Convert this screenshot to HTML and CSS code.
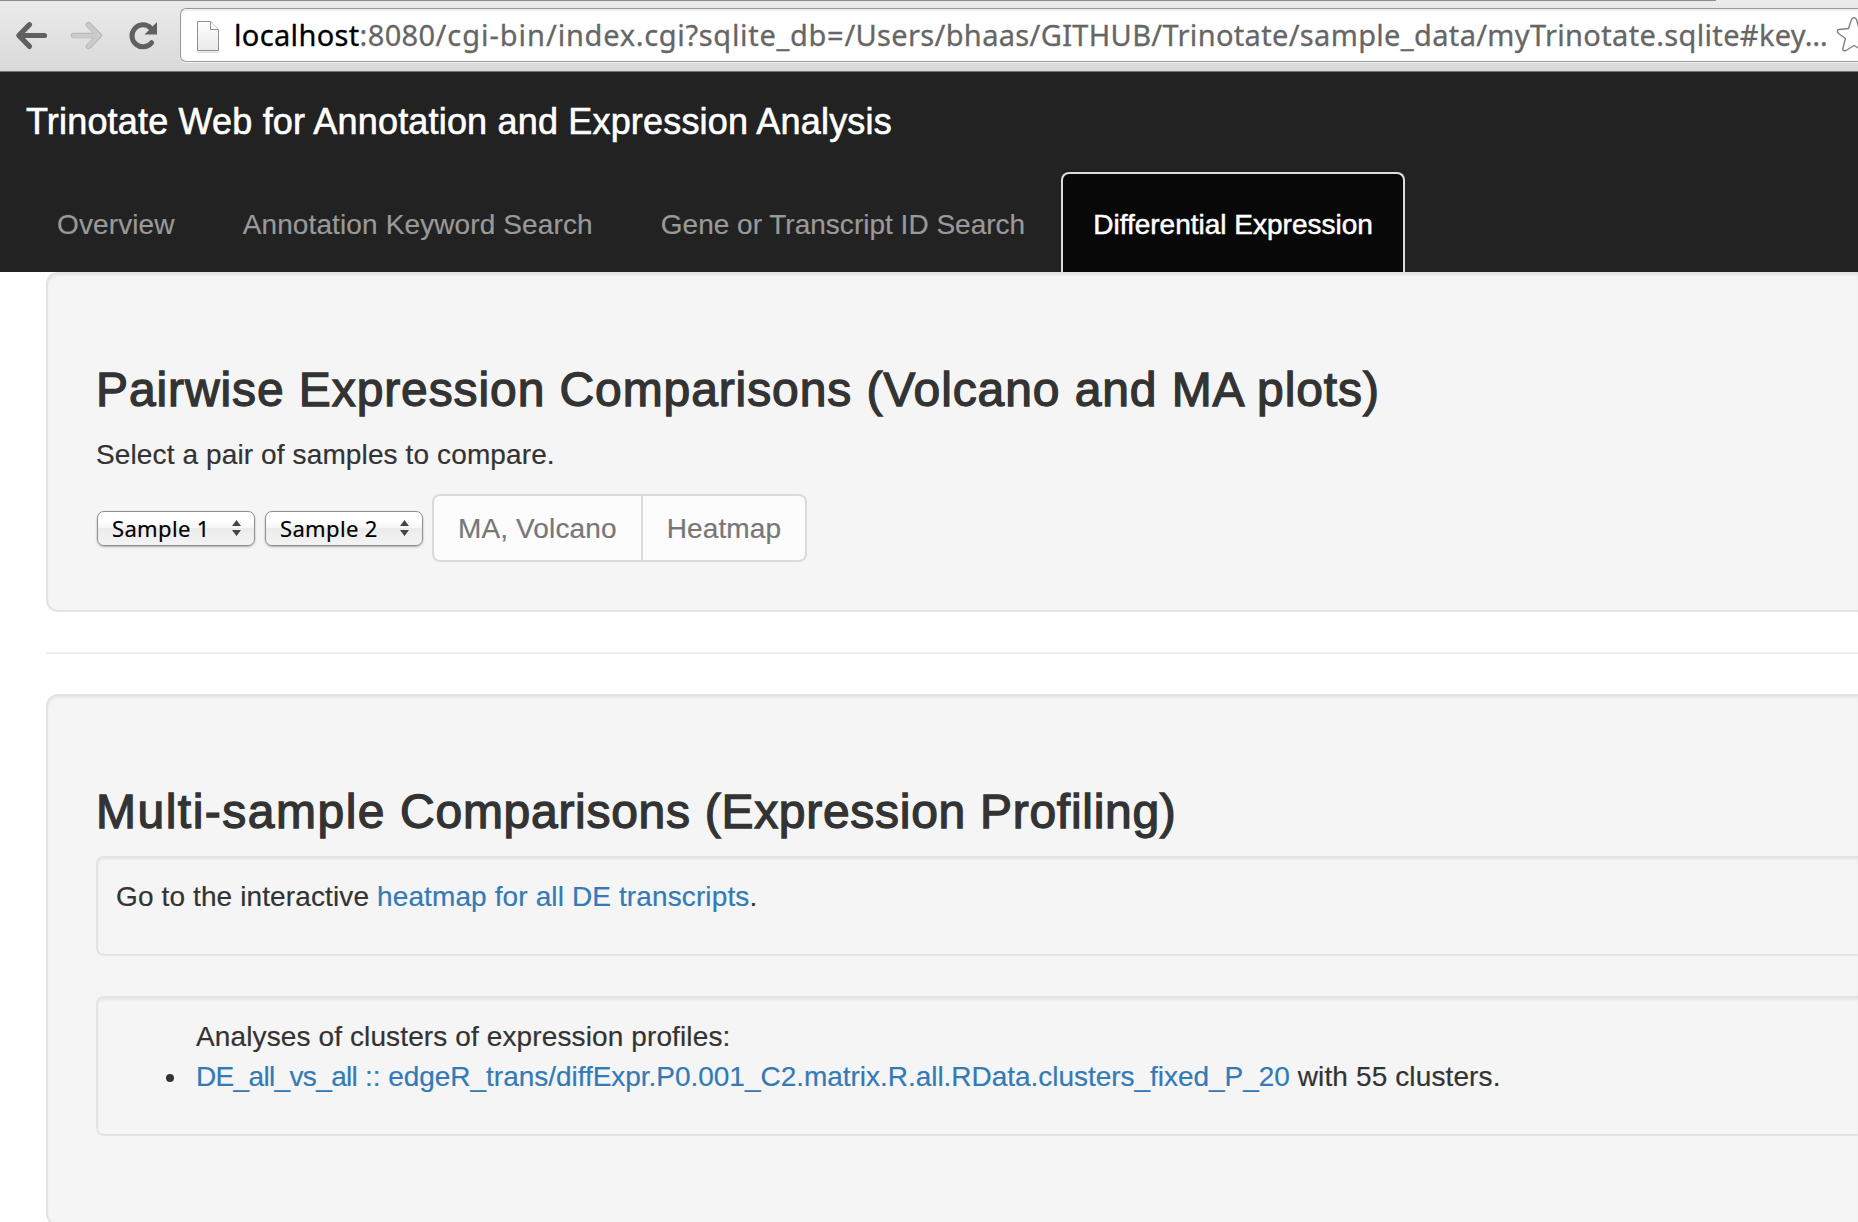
FILE: index.html
```html
<!DOCTYPE html>
<html lang="en">
<head>
<meta charset="utf-8">
<title>Trinotate Web</title>
<link rel="stylesheet" href="styles.css">
</head>
<body>
<div class="toolbar">
  <svg class="controls" width="180" height="70" viewBox="0 0 180 70" fill="none" stroke-linecap="round" stroke-linejoin="round">
    <path d="M44.5 34.5H20M29.500 23.700L18.800 34.500L29.500 45.400" stroke="#606060" stroke-width="5.200"/>
    <path d="M73.500 34.500H98M88.500 23.700L99.200 34.500L88.500 45.400" stroke="#b5b5b5" stroke-width="5.600"/>
    <path d="M73.500 34.700H98M88.500 24.100L99 34.600L88.500 45.200" stroke="#cbcbcb" stroke-width="4"/>
    <path d="M151.600 41.700A11 11 0 1 1 150.500 26.800" stroke="#606060" stroke-width="5"/>
    <path d="M157 21V33.500H144.500Z" fill="#606060"/>
  </svg>
  <div class="omnibox">
    <svg class="page-icon" width="24" height="34" viewBox="0 0 24 34">
      <defs><linearGradient id="sheet" x1="0" y1="0" x2="0" y2="1"><stop offset="0" stop-color="#fff"/><stop offset="1" stop-color="#e9e9e9"/></linearGradient></defs>
      <path d="M1 32.300H23" stroke="#ddd" stroke-width="1.500"/>
      <path d="M1.500 1.500H14.500L22.500 9.500V30.500H1.500Z" fill="url(#sheet)" stroke="#8f8f8f"/>
      <path d="M14.500 1.500V9.500H22.500" fill="#fff" stroke="#8f8f8f"/>
    </svg>
    <span class="url"><b class="host">localhost</b>:8080<span class="dir">/cgi-bin/</span><span class="query">index.cgi?sqlite_db=</span>/Users/bhaas/GITHUB/Trinotate/sample_data/myTrinotate.sqlite#key…</span>
    <svg class="star" width="36" height="36" viewBox="0 0 36 36" fill="none" stroke="#808080" stroke-width="1.400" stroke-linejoin="round">
      <path d="M15.500 2.500Q18 -1 20.500 2.500L23 11.500L33 12.500Q36 13.500 33.500 16L26.500 21.500L29 31Q29 34 26 33L18 28.500L10 33.500Q6 34.500 7 31L9.500 21.500L2.500 16.500Q0 13.500 3 12.500L12.500 11.500Z"/>
    </svg>
  </div>
</div>

<nav class="navbar">
  <a class="brand">Trinotate Web for Annotation and Expression Analysis</a>
  <ul class="tabs">
    <li class="tab">Overview</li>
    <li class="tab">Annotation Keyword Search</li>
    <li class="tab tight">Gene or Transcript ID Search</li>
    <li class="tab active">Differential Expression</li>
  </ul>
</nav>

<main class="content">
  <section class="well well-lg">
    <h3>Pairwise Expression Comparisons (Volcano and MA plots)</h3>
    <p>Select a pair of samples to compare.</p>
    <div class="pickers">
      <div class="select">Sample 1<svg width="9" height="16" viewBox="0 0 9 16" fill="#444"><path d="M0 6L4.500 0L9 6ZM0 10L4.500 16L9 10Z"/></svg></div>
      <div class="select">Sample 2<svg width="9" height="16" viewBox="0 0 9 16" fill="#444"><path d="M0 6L4.500 0L9 6ZM0 10L4.500 16L9 10Z"/></svg></div>
      <div class="btn-group">
        <button class="btn" disabled>MA, Volcano</button><button class="btn" disabled>Heatmap</button>
      </div>
    </div>
  </section>
  <hr>
  <section class="well well-lg">
    <h3 class="profiling"><span class="lead">Multi-sample</span> Comparisons (Expression Profiling)</h3>
    <div class="well"><p>Go to the interactive <a>heatmap for all DE transcripts</a>.</p></div>
    <div class="well">
      <ul class="analyses">Analyses of clusters of expression profiles:
        <li><a class="cluster"><span class="set">DE_all_vs_all</span> :: edgeR_trans/diffExpr.P0.001_C2.matrix.R.all.RData.clusters_fixed_P_20</a> with 55 clusters.</li>
      </ul>
    </div>
  </section>
</main>
</body>
</html>
```
FILE: styles.css
```css
* { box-sizing: border-box; }

html { overflow: hidden; }

body {
  margin: 0;
  height: 1222px;
  overflow: hidden;
  background: #fff;
  color: #333;
  font: 28px/40px "Liberation Sans", Arial, sans-serif;
  letter-spacing: .12px;
  white-space: nowrap;
  -webkit-text-stroke: .2px;
}

.toolbar {
  display: flex;
  height: 72px;
  padding-top: 1px;
  background:
    linear-gradient(#8f8b8f, #8f8b8f) 0 0 / 1716px 1px no-repeat,
    linear-gradient(#ebebeb, #d9d9d9);
  border-bottom: 1px solid #6f7371;
}

.controls { flex: none; }

.omnibox {
  display: flex;
  flex: 1;
  min-width: 0;
  height: 54px;
  margin-top: 7px;
  padding-left: 15px;
  overflow: hidden;
  background: #fff;
  border: 1px solid #999;
  border-right: 0;
  border-radius: 6px 0 0 6px;
  box-shadow: inset 0 2px 2px #eee, 0 1px 0 #f5f5f5;
}

.page-icon { flex: none; margin-top: 11px; }

.url {
  flex: none;
  width: 1602px;
  margin-left: 14px;
  font: 29px/52px "Noto Sans", sans-serif;
  letter-spacing: .34px;
  color: #666;
  -webkit-text-stroke: .3px;
}

.host { font-weight: 400; color: #000; }

.dir { letter-spacing: 1px; }

.query { letter-spacing: .7px; }

.star { flex: none; margin-top: 8px; }

.navbar {
  height: 200px;
  padding: 30px 0 0 25px;
  background: #222;
}

.brand {
  display: block;
  height: 70px;
  padding-left: 1px;
  color: #fff;
  font-size: 36px;
  letter-spacing: .18px;
  -webkit-text-stroke: .6px;
}

.tabs {
  display: flex;
  gap: 4px;
  margin: 0;
  padding: 0;
  list-style: none;
}

.tab {
  height: 100px;
  padding: 31px 30px 0;
  border: 2px solid transparent;
  border-bottom: 0;
  border-radius: 8px 8px 0 0;
  color: #999;
}

.tab.tight { letter-spacing: .01px; }

.tab.active {
  background: #080808;
  border-color: #ddd;
  color: #fff;
  letter-spacing: 0;
  -webkit-text-stroke: .5px;
}

.content { padding-left: 46px; }

/* Wells run off the right side of the window, so that side has no edge. */
.well {
  margin-bottom: 40px;
  padding: 18px 0 18px 18px;
  background: #f5f5f5;
  border: 2px solid #e3e3e3;
  border-right: 0;
  border-radius: 8px 0 0 8px;
  box-shadow: inset 0 2px 2px rgba(0, 0, 0, .05);
}

.well-lg { padding: 48px 0 48px 48px; border-radius: 12px 0 0 12px; }

h3 {
  margin: 40px 0 18px;
  padding-top: 2px;
  font-size: 48px;
  font-weight: 400;
  line-height: 52px;
  letter-spacing: .9px;
  -webkit-text-stroke: 1.3px;
}

h3.profiling { letter-spacing: .71px; }

.lead { letter-spacing: 1.5px; }

p { margin: 0 0 19px; padding-top: 1px; }

hr {
  margin: 40px 0;
  border: 0;
  border-top: 2px solid #eee;
}

a { color: #337ab7; }

.pickers { display: flex; align-items: center; }

.select {
  display: flex;
  align-items: center;
  justify-content: space-between;
  width: 158px;
  height: 35px;
  margin: 0 9px 0 1px;
  padding: 0 13px 1px 14px;
  background: linear-gradient(#fff 0 25%, #f5f5f5 50%, #ebebeb 50%, #f4f4f4);
  border: 1px solid #8e8e8e;
  border-radius: 7px;
  box-shadow: 0 1px 2px rgba(0, 0, 0, .3);
  color: #000;
  font: 22px/30px "Noto Sans", sans-serif;
  letter-spacing: .35px;
}

.btn-group { display: flex; }

.btn {
  height: 68px;
  padding: 2px 24px 0;
  background: #fcfcfc;
  border: 2px solid #dadada;
  border-radius: 8px 0 0 8px;
  color: #777;
  font: inherit;
  letter-spacing: .13px;
}

.btn + .btn { margin-left: -2px; border-radius: 0 8px 8px 0; }

.analyses {
  margin: 0 0 19px;
  padding: 1px 0 0 80px;
  list-style: none;
}

.analyses li { display: flex; align-items: center; white-space: pre; }

.analyses li::before {
  content: "";
  width: 8px;
  height: 8px;
  margin: 2px 22px 0 -30px;
  border-radius: 50%;
  background: #333;
}

.cluster { letter-spacing: -.03px; }

.set { letter-spacing: -.65px; }
```
